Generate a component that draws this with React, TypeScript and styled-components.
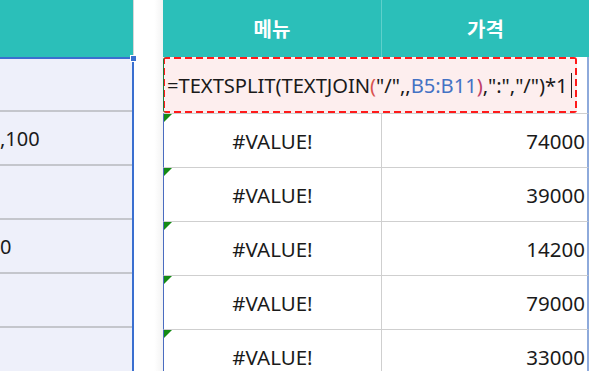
import React from 'react'
import styled, { createGlobalStyle } from 'styled-components'

const GlobalStyle = createGlobalStyle`
  html, body {
    margin: 0;
    padding: 0;
    background: #ffffff;
  }
  body {
    font-family: "Noto Sans", "Noto Sans CJK KR", sans-serif;
    color: #1a1a1a;
  }
`

const TEAL = '#2bbfb9'
const ROW_H = 54
const DASH = '#ff1a1a'

const Screen = styled.div`
  display: flex;
  width: 600px;
  height: 371px;
  overflow: hidden;
  background: #ffffff;
`

const LeftSheet = styled.div`
  width: 134px;
  flex: none;
  display: flex;
  flex-direction: column;
  position: relative;
`

const LeftHeader = styled.div`
  height: 57px;
  background: ${TEAL};
  border-right: 1px solid #d6d6d6;
`

const LeftBody = styled.div`
  flex: 1;
  background: #eef0fa;
  border-top: 2px solid #3a6fd0;
  border-right: 2px solid #3a6fd0;
`

const LeftRow = styled.div`
  height: ${ROW_H}px;
  box-sizing: border-box;
  border-bottom: 2px solid #c4c6cc;
  display: flex;
  align-items: center;
  overflow: hidden;
  font-size: 20px;
  &:first-child {
    height: ${ROW_H - 1}px;
  }
`

const Handle = styled.div`
  position: absolute;
  left: 130px;
  top: 55px;
  width: 5px;
  height: 5px;
  background: #3a6fd0;
  border: 1px solid #ffffff;
`

const Gutter = styled.div`
  width: 29px;
  flex: none;
  background: linear-gradient(to right, #ffffff 70%, #f3f3f3);
`

const RightSheet = styled.div`
  width: 426px;
  flex: none;
  display: grid;
  grid-template-columns: 218px 208px;
  grid-auto-rows: ${ROW_H}px;
  grid-template-rows: 57px 56px;
`

const HeadCell = styled.div`
  background: ${TEAL};
  color: #ffffff;
  font-weight: 700;
  font-size: 20px;
  display: flex;
  align-items: center;
  justify-content: center;
  & + & {
    border-left: 1px solid #5fd0cb;
  }
`

const EditRow = styled.div`
  grid-column: 1 / span 2;
  display: flex;
  background: #ffffff;
  border-right: 2px solid #8eaadb;
`

const Editor = styled.div`
  width: 414px;
  box-sizing: border-box;
  height: 56px;
  background-color: #fdeeee;
  background-image:
    repeating-linear-gradient(to right, ${DASH} 0 7px, transparent 7px 11px),
    repeating-linear-gradient(to right, ${DASH} 0 7px, transparent 7px 11px),
    repeating-linear-gradient(to bottom, ${DASH} 0 7px, transparent 7px 11px),
    repeating-linear-gradient(to bottom, ${DASH} 0 7px, transparent 7px 11px);
  background-size: 100% 2px, 100% 2px, 2px 100%, 2px 100%;
  background-position: top left, bottom left, top left, top right;
  background-repeat: no-repeat;
  border-radius: 3px;
  box-shadow: inset 1px 0 0 #1e7a3c;
  display: flex;
  align-items: center;
  padding-left: 4px;
  font-size: 20.2px;
  white-space: nowrap;
  letter-spacing: -0.05px;
`

const Tok = styled.span<{ $c?: string }>`
  color: ${p => p.$c ?? '#1a1a1a'};
`

const Caret = styled.span`
  display: inline-block;
  width: 1px;
  height: 25px;
  margin-left: 3px;
  background: #222;
  vertical-align: middle;
`

const Cell = styled.div<{ $align: 'center' | 'right'; $flag?: boolean }>`
  position: relative;
  display: flex;
  align-items: center;
  justify-content: ${p => (p.$align === 'center' ? 'center' : 'flex-end')};
  padding-right: ${p => (p.$align === 'right' ? '2px' : '0')};
  font-size: 20.5px;
  border-top: 1px solid #cfcfcf;
  border-left: 1px solid ${p => (p.$align === 'center' ? '#4a6cc0' : '#cfcfcf')};
  border-right: ${p => (p.$align === 'right' ? '2px solid #8eaadb' : 'none')};
  &::before {
    content: '';
    display: ${p => (p.$flag ? 'block' : 'none')};
    position: absolute;
    left: 0;
    top: 0;
    border-top: 8px solid #138a13;
    border-right: 8px solid transparent;
  }
`

const prices = [74000, 39000, 14200, 79000, 33000]
const leftRows = ['', ',100', '', '0', '']

export default function App() {
  return (
    <>
      <GlobalStyle />
      <Screen>
        <LeftSheet>
          <LeftHeader />
          <LeftBody>
            {leftRows.map((t, i) => (
              <LeftRow key={i}>{t}</LeftRow>
            ))}
          </LeftBody>
          <Handle />
        </LeftSheet>
        <Gutter />
        <RightSheet>
          <HeadCell>메뉴</HeadCell>
          <HeadCell>가격</HeadCell>
          <EditRow>
            <Editor>
              <Tok>=TEXTSPLIT(TEXTJOIN</Tok>
              <Tok $c="#d9534f">(</Tok>
              <Tok>"/",,</Tok>
              <Tok $c="#4472c4">B5:B11</Tok>
              <Tok $c="#c0406a">)</Tok>
              <Tok>,":","/")*1</Tok>
              <Caret />
            </Editor>
          </EditRow>
          {prices.map(p => (
            <React.Fragment key={p}>
              <Cell $align="center" $flag>#VALUE!</Cell>
              <Cell $align="right">{p}</Cell>
            </React.Fragment>
          ))}
        </RightSheet>
      </Screen>
    </>
  )
}
